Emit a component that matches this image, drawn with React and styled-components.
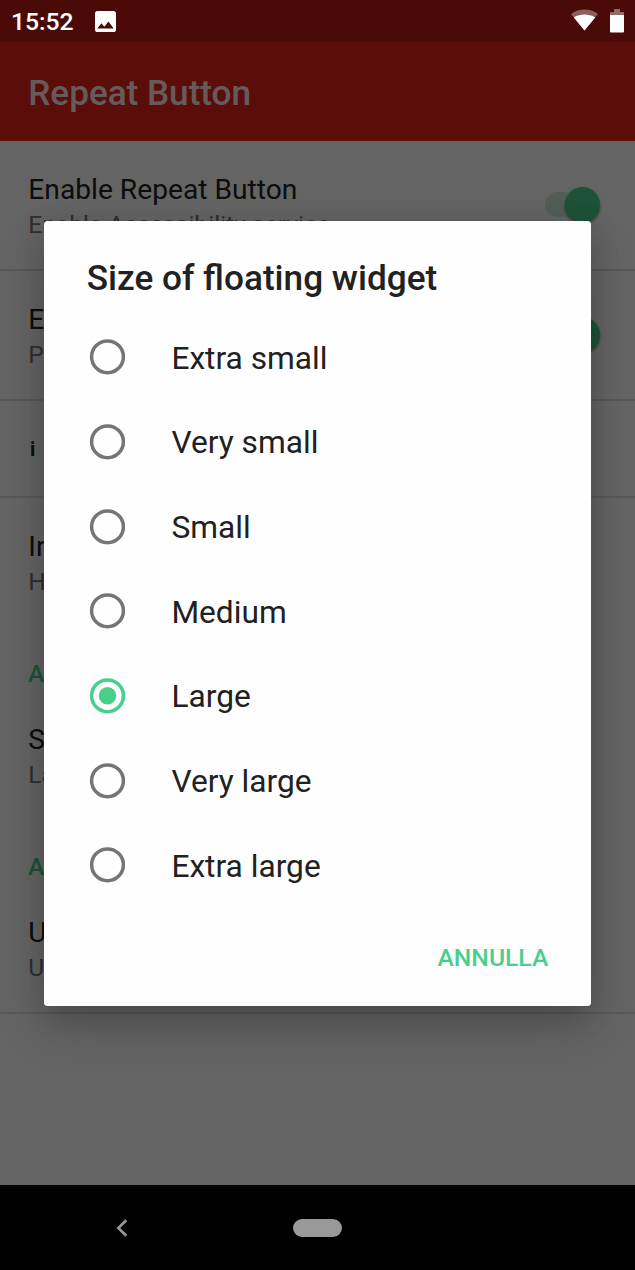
import React, { useState } from 'react';
import styled, { createGlobalStyle } from 'styled-components';

const GlobalStyle = createGlobalStyle`
  * {
    box-sizing: border-box;
  }

  body {
    margin: 0;
    background: #000;
    font-family: Roboto, 'Noto Sans', sans-serif;
  }
`;

const Phone = styled.div`
  position: relative;
  display: flex;
  flex-direction: column;
  width: 635px;
  height: 1270px;
  overflow: hidden;
`;

const Screen = styled.div`
  display: flex;
  flex-direction: column;
  flex: 1;
  min-height: 0;
  background: #fafafa;
`;

const AppBar = styled.header`
  height: 141px;
  padding: 31px 28.3px 0;
  border-top: 42px solid #b91a14;
  background: #e3211a;

  h1 {
    margin: 0;
    color: rgba(255, 255, 255, 0.9);
    font-size: 35.1px;
    font-weight: 500;
    line-height: 41px;
  }
`;

const Preference = styled.div`
  display: flex;
  justify-content: space-between;
  height: ${({ $divider }) => ($divider ? '130px' : '129px')};
  padding: 32px 28px 0 28.3px;
  border-bottom: ${({ $divider }) => ($divider ? '2px solid #dfdfdf' : '0')};
  white-space: nowrap;

  h3 {
    margin: 0 0 3px;
    color: #212121;
    font-size: 28.2px;
    font-weight: 400;
    line-height: 34px;
  }

  p {
    margin: 0;
    color: #757575;
    font-size: 24.6px;
    line-height: 30px;
  }
`;

const Info = styled.div`
  height: 96.5px;
  padding: 35px 30px 0;
  border-bottom: 2px solid #dfdfdf;
  color: #212121;
  font-size: 20px;
  font-weight: 700;
  line-height: 26px;
`;

const Category = styled.h2`
  height: 64.2px;
  margin: 0;
  padding: 32px 28px 0;
  color: #48cf8c;
  font-size: 24.7px;
  font-weight: 500;
  line-height: 30px;
`;

const Switch = styled.div`
  display: flex;
  align-items: center;
  justify-content: flex-end;
  width: 54px;
  height: 25px;
  margin: 19px 8px 0 0;
  border-radius: 13px;
  background: #cbe9da;

  span {
    flex: none;
    width: 35.5px;
    height: 35.5px;
    margin-right: -1px;
    border-radius: 50%;
    background: #48cf8c;
    box-shadow: 0 2px 3px rgba(0, 0, 0, 0.45);
  }
`;

const Scrim = styled.div`
  position: absolute;
  inset: 0 0 85px;
  display: flex;
  justify-content: center;
  align-items: flex-start;
  padding-top: 221px;
  background: rgba(0, 0, 0, 0.6);
`;

const Dialog = styled.div`
  display: flex;
  flex-direction: column;
  width: 547px;
  height: 785px;
  border-radius: 3.5px;
  background: #fefefe;
  box-shadow: 0 22px 44px rgba(0, 0, 0, 0.18), 0 6px 30px rgba(0, 0, 0, 0.14);

  h2 {
    margin: 0;
    padding: 37px 42.7px 15.5px;
    color: #212121;
    font-size: 35.2px;
    font-weight: 500;
    line-height: 41px;
  }
`;

const Option = styled.div`
  display: flex;
  align-items: center;
  gap: 46.4px;
  height: 84.67px;
  padding-left: 45px;
  color: #212121;
  font-size: 31.7px;
  line-height: 38px;
  cursor: pointer;

  span {
    padding-top: 4px;
  }
`;

const RadioRing = styled.svg`
  display: block;
  color: ${({ $checked }) => ($checked ? '#48cf8c' : '#757575')};
`;

const Actions = styled.div`
  display: flex;
  justify-content: flex-end;
  padding: 36px 42.7px 0;

  button {
    padding: 0;
    border: 0;
    background: none;
    color: #48cf8c;
    font: 500 24.7px/30px Roboto, sans-serif;
  }
`;

const StatusBar = styled.div`
  position: absolute;
  inset: 0 0 auto;
  display: flex;
  align-items: center;
  height: 42px;
  padding: 0 11px;
  color: #fff;

  time {
    padding-top: 2px;
    font-size: 24.7px;
    font-weight: 500;
    line-height: 30px;
  }

  svg {
    display: block;
  }
`;

const PictureIcon = styled.svg`
  margin-left: 21px;
`;

const SystemIcons = styled.div`
  display: flex;
  gap: 12px;
  margin-left: auto;
`;

const NavBar = styled.nav`
  display: flex;
  align-items: center;
  height: 85px;
  padding-left: 116px;
  background: #000;
`;

const HomePill = styled.div`
  width: 49.5px;
  height: 18px;
  margin-left: 164.5px;
  border-radius: 9px;
  background: #999;
`;

const sizes = [
  'Extra small',
  'Very small',
  'Small',
  'Medium',
  'Large',
  'Very large',
  'Extra large',
];

const Radio = ({ checked }) => (
  <RadioRing $checked={checked} width='36' height='37' viewBox='0 0 36 37'>
    <circle
      cx='18.5'
      cy='18.8'
      r='15.9'
      fill='none'
      stroke='currentColor'
      strokeWidth='3.5'
    />
    {checked && <circle cx='18.5' cy='18.8' r='8.8' fill='currentColor' />}
  </RadioRing>
);

const Setting = ({ title, summary, divider, toggle }) => (
  <Preference $divider={divider}>
    <div>
      <h3>{title}</h3>
      <p>{summary}</p>
    </div>
    {toggle && (
      <Switch>
        <span />
      </Switch>
    )}
  </Preference>
);

const App = () => {
  const [selected, setSelected] = useState('Large');

  return (
    <Phone>
      <GlobalStyle />
      <Screen>
        <AppBar>
          <h1>Repeat Button</h1>
        </AppBar>
        <Setting
          title='Enable Repeat Button'
          summary='Enable Accessibility service'
          divider
          toggle
        />
        <Setting title='Enable' summary='Press' divider toggle />
        <Info>i</Info>
        <Setting title='Info' summary='Help' />
        <Category>Aspect</Category>
        <Setting title='Size' summary='Large' />
        <Category>About</Category>
        <Setting title='Updates' summary='Update' divider />
      </Screen>

      <Scrim>
        <Dialog role='dialog'>
          <h2>Size of floating widget</h2>
          {sizes.map((size) => (
            <Option key={size} onClick={() => setSelected(size)}>
              <Radio checked={size === selected} />
              <span>{size}</span>
            </Option>
          ))}
          <Actions>
            <button type='button'>ANNULLA</button>
          </Actions>
        </Dialog>
      </Scrim>

      <StatusBar>
        <time>15:52</time>
        <PictureIcon width='21' height='21' viewBox='3 3 18 18' fill='#fff'>
          <path d='M21 19V5c0-1.1-.9-2-2-2H5c-1.1 0-2 .9-2 2v14c0 1.1.9 2 2 2h14c1.1 0 2-.9 2-2zM8.5 13.5l2.5 3.01L14.5 12l4.5 6H5l3.5-4.5z' />
        </PictureIcon>
        <SystemIcons>
          <svg width='27' height='22' viewBox='0 0 27 22' fill='#fff'>
            <path
              d='M13.5 21.5L0 5C4 1.7 8.5 0.5 13.5 0.5S23 1.7 27 5z'
              opacity='0.35'
            />
            <path d='M13.5 21.5L2.8 8.4C6 6.3 10 5.500 13.5 5.5S21 6.300 24.200 8.400z' />
          </svg>
          <svg width='14' height='24' viewBox='0 0 14 24' fill='#fff'>
            <path d='M4 0h6v3h4v3H0V3h4z' opacity='0.4' />
            <path d='M0 6h14v16.5q0 1-1 1H1q-1 0-1-1z' />
          </svg>
        </SystemIcons>
      </StatusBar>

      <NavBar>
        <svg width='12' height='18' viewBox='0 0 12 18' fill='none'>
          <path d='M10.3 1.2L2.3 9l8 7.800' stroke='#999' strokeWidth='2.6' />
        </svg>
        <HomePill />
      </NavBar>
    </Phone>
  );
};

export default App;
